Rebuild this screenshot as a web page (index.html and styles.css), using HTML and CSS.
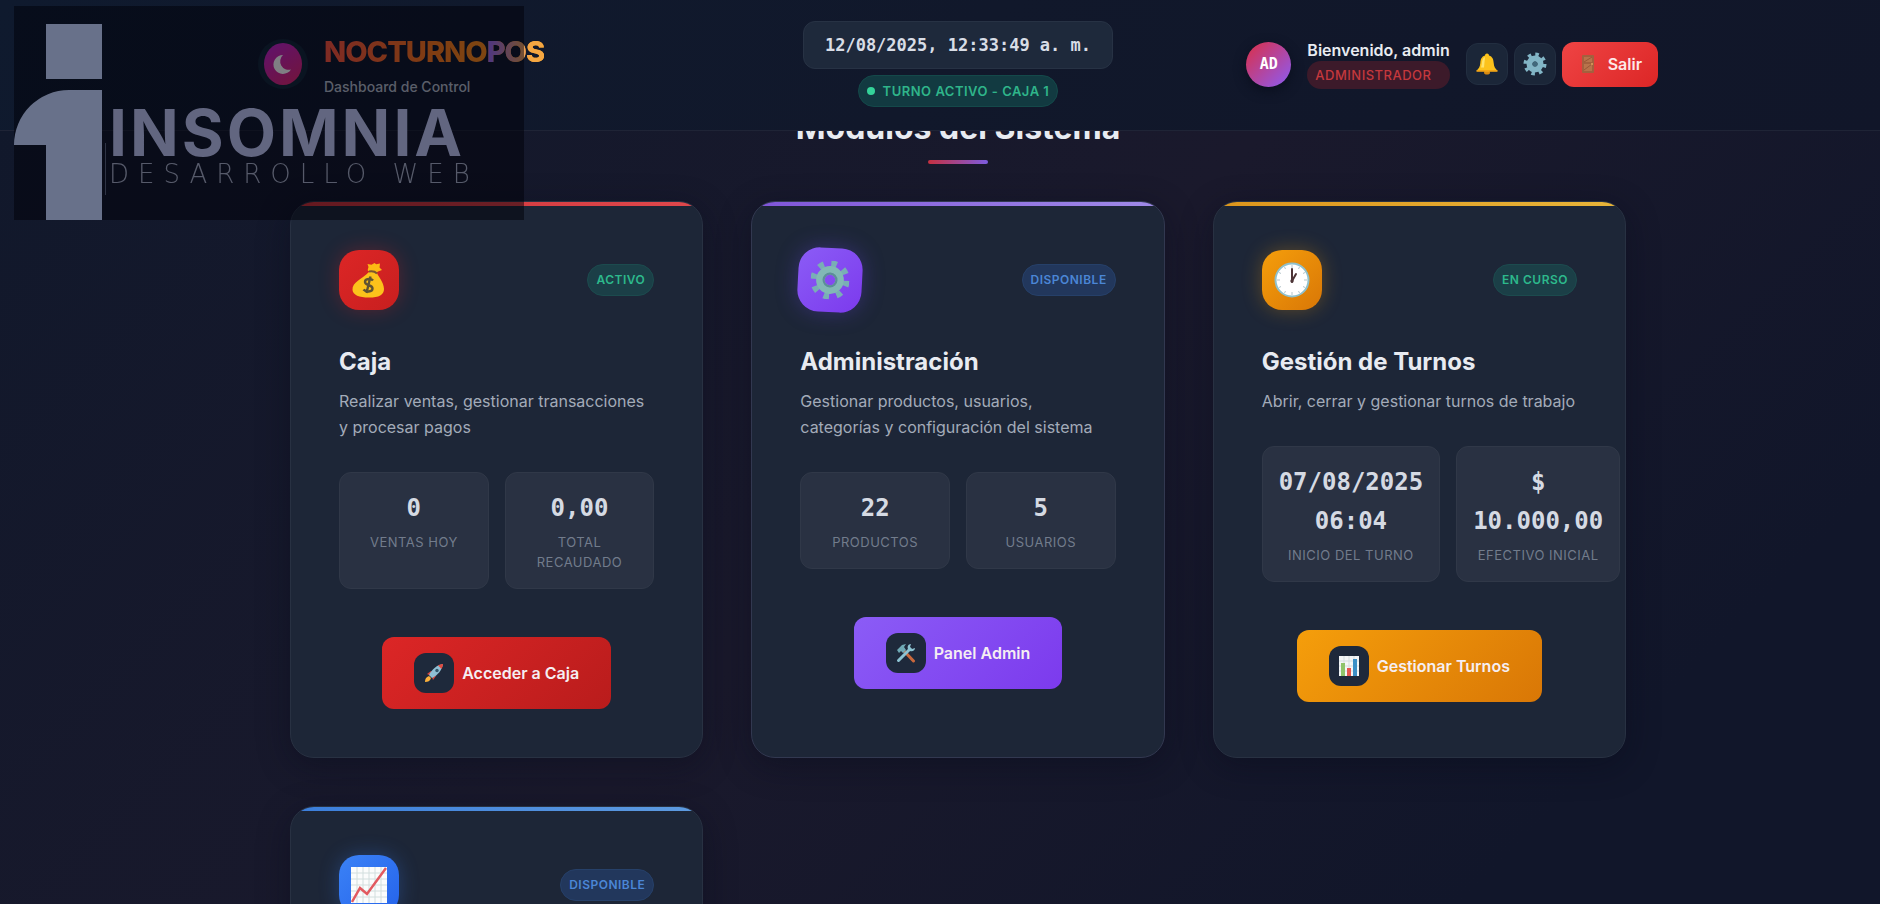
FILE: index.html
```html
<!DOCTYPE html>
<html lang="es">

<head>
    <meta charset="UTF-8">
    <meta name="viewport" content="width=device-width, initial-scale=1.0">
    <title>NocturnoPOS - Dashboard de Control</title>
    <link rel="stylesheet" href="styles.css">
</head>

<body>
    <!-- Header -->
    <header class="header">
        <div class="header-content">
            <div class="logo-section">
                <div class="logo-icon">
                    <svg viewBox="0 0 50 50" width="50" height="50">
                        <defs>
                            <linearGradient id="moonBg" x1="0" y1="0" x2="0.6" y2="1">
                                <stop offset="0" stop-color="#c026d3" />
                                <stop offset="1" stop-color="#e0287c" />
                            </linearGradient>
                        </defs>
                        <circle cx="25" cy="25" r="25" fill="#15283a" />
                        <ellipse cx="25" cy="25" rx="19" ry="21" fill="url(#moonBg)" />
                        <path d="M25 16a9.500 9.500 0 1 0 8 14.500a8.500 8.500 0 0 1-8-14.500z" fill="#fff" />
                    </svg>
                </div>
                <div class="logo-text">
                    <h1>NOCTURNO<span>POS</span></h1>
                    <p>Dashboard de Control</p>
                </div>
            </div>

            <div class="header-center">
                <div class="datetime">12/08/2025, 12:33:49 a. m.</div>
                <div class="turno-status"><span class="dot"></span>TURNO ACTIVO - CAJA 1</div>
            </div>

            <div class="user-section">
                <div class="avatar">AD</div>
                <div class="user-info">
                    <div class="user-name">Bienvenido, admin</div>
                    <div class="user-role">ADMINISTRADOR</div>
                </div>
                <div class="header-actions">
                    <button type="button" class="icon-btn" aria-label="Notificaciones">
                        <svg viewBox="0 0 24 24" width="24" height="24">
                            <ellipse cx="12" cy="20.500" rx="3" ry="2" fill="#d98a10" />
                            <path d="M12 1.500c-1.500 0-2 1-2 2C6.500 4.500 5.500 7.500 5.300 11c-.2 4-1.600 5.500-3.600 7.500h20.600c-2-2-3.400-3.500-3.600-7.500C18.500 7.500 17.500 4.500 14 3.500c0-1-.5-2-2-2z" fill="#fcc21b" />
                            <path d="M10 5c-2.500 1-3 4-3.200 7l-.8 3.500h3z" fill="#ffe36a" />
                            <path d="M1.500 18h21v1.800h-21z" fill="#f2a516" />
                        </svg>
                    </button>
                    <button type="button" class="icon-btn" aria-label="Ajustes">
                        <svg viewBox="0 0 24 24" width="24" height="24">
                            <circle cx="12" cy="12" r="9.500" fill="none" stroke="#82b5c6" stroke-width="4" stroke-dasharray="3.460 4" />
                            <circle cx="12" cy="12" r="5.500" fill="none" stroke="#82b5c6" stroke-width="6" />
                            <circle cx="12" cy="12" r="2.500" fill="#41697c" />
                        </svg>
                    </button>
                    <button type="button" class="logout-btn">
                        <svg viewBox="0 0 20 20" width="20" height="20">
                            <rect x="4" y="1" width="12" height="18" rx="1" fill="#a4603e" />
                            <path d="M6 3h8v5H6zM6 10h8v7H6z" fill="#b8734b" />
                            <path d="M6 8l8-5M6 16l8-6" stroke="#985738" />
                            <circle cx="14" cy="10" r="1" fill="#e0a25e" />
                        </svg>
                        Salir
                    </button>
                </div>
            </div>
        </div>
    </header>

    <!-- Modulos -->
    <main class="main">
        <h2 class="section-title">Módulos del Sistema</h2>

        <div class="modules-grid">
            <article class="module-card caja">
                <div class="module-header">
                    <div class="module-icon">
                        <svg viewBox="0 0 36 36" width="36" height="36">
                            <path d="M18 9c-2 0-1-2-.5-4l-1-3 4 .8L23.500 1l1.700 1.200L29 1.500l-.5 4L31 8l-4 1.500-3 2.500z" fill="#fdb813" />
                            <path d="M18 10c3-1.500 7-1 8 1 .8 3 7 9 7 16 0 6-5 8.500-15 8.500S2 33 1.500 28C1 20 11 17 18 10z" fill="#fcc21b" />
                            <path d="M18 9.500c3-.5 6 0 8 2" fill="none" stroke="#7b5530" stroke-width="2" />
                            <path d="M22 18.500c-1.500-2-8-2.500-8 1.500s7.500 2.500 7.500 6.500-7 3.500-9 1M19.500 14.500l-4 16.500" fill="none" stroke="#5f5333" stroke-width="2.400" />
                        </svg>
                    </div>
                    <span class="badge green">ACTIVO</span>
                </div>
                <h3>Caja</h3>
                <p class="description">Realizar ventas, gestionar transacciones y procesar pagos</p>
                <div class="stats">
                    <div class="stat">
                        <div class="stat-value">0</div>
                        <div class="stat-label">VENTAS HOY</div>
                    </div>
                    <div class="stat">
                        <div class="stat-value">0,00</div>
                        <div class="stat-label">TOTAL RECAUDADO</div>
                    </div>
                </div>
                <button type="button" class="module-btn">
                    <span class="btn-icon">
                        <svg viewBox="0 0 20 20" width="20" height="20">
                            <path d="M3 11l4-3 5 5-3 4-1-3-3-2z" fill="#d9453c" />
                            <path d="M5 12C8 6 13 2 19 1c-1 6-5 11-11 14z" fill="#8fbfd4" />
                            <path d="M14 2.500C16 1.500 17.500 1 19 1c0 1.500-.5 3-1.500 5z" fill="#e24b40" />
                            <circle cx="13" cy="7.500" r="1.700" fill="#34586d" />
                            <path d="M5 13l2 2c-1 3-3 4-6 4 0-3 1-5 4-6z" fill="#fdb13b" />
                        </svg>
                    </span>
                    Acceder a Caja
                </button>
            </article>

            <article class="module-card admin">
                <div class="module-header">
                    <div class="module-icon">
                        <svg viewBox="0 0 36 36" width="36" height="36">
                            <circle cx="18" cy="18" r="15.500" fill="none" stroke="#79aeb5" stroke-width="6" stroke-dasharray="5.170 7" />
                            <circle cx="18" cy="18" r="9" fill="none" stroke="#82b8b5" stroke-width="8" />
                            <circle cx="18" cy="18" r="6" fill="none" stroke="#5c8d99" stroke-width="2" />
                        </svg>
                    </div>
                    <span class="badge blue">DISPONIBLE</span>
                </div>
                <h3>Administración</h3>
                <p class="description">Gestionar productos, usuarios, categorías y configuración del sistema</p>
                <div class="stats">
                    <div class="stat">
                        <div class="stat-value">22</div>
                        <div class="stat-label">PRODUCTOS</div>
                    </div>
                    <div class="stat">
                        <div class="stat-value">5</div>
                        <div class="stat-label">USUARIOS</div>
                    </div>
                </div>
                <button type="button" class="module-btn">
                    <span class="btn-icon">
                        <svg viewBox="0 0 20 20" width="20" height="20">
                            <path d="M8 8l9.500 10" stroke="#c9683c" stroke-width="3" stroke-linecap="round" />
                            <path d="M1 7l5-5 4-1-2 3 2 3-3 3-2-2-2 2z" fill="#6fa9b5" />
                            <path d="M2.500 17.500L14 6" stroke="#8cc3d2" stroke-width="3" stroke-linecap="round" />
                            <path d="M15 1c-3 0-4 3-3 5l2 2c3 1 5-1 5-3l-3 1-2-2z" fill="#8cc3d2" />
                        </svg>
                    </span>
                    Panel Admin
                </button>
            </article>

            <article class="module-card turnos">
                <div class="module-header">
                    <div class="module-icon">
                        <svg viewBox="0 0 36 36" width="36" height="36">
                            <circle cx="18" cy="18" r="16.500" fill="#fff" stroke="#8fc0cb" stroke-width="2" />
                            <path d="M18 3v3M18 30v3M3 18h3M30 18h3M10.500 5l1 2M25.500 5l-1 2M5 10.500l2 1M31 10.500l-2 1M5 25.500l2-1M31 25.500l-2-1M10.500 31l1-2M25.500 31l-1-2" stroke="#b5c5ca" />
                            <path d="M18 20V7M18 19l4-7" stroke="#4d3436" stroke-width="2" stroke-linecap="round" />
                            <circle cx="18" cy="19" r="1.700" fill="#4d3436" />
                        </svg>
                    </div>
                    <span class="badge green">EN CURSO</span>
                </div>
                <h3>Gestión de Turnos</h3>
                <p class="description">Abrir, cerrar y gestionar turnos de trabajo</p>
                <div class="stats">
                    <div class="stat">
                        <div class="stat-value">07/08/2025 06:04</div>
                        <div class="stat-label">INICIO DEL TURNO</div>
                    </div>
                    <div class="stat">
                        <div class="stat-value">$ 10.000,00</div>
                        <div class="stat-label">EFECTIVO INICIAL</div>
                    </div>
                </div>
                <button type="button" class="module-btn">
                    <span class="btn-icon">
                        <svg viewBox="0 0 20 20" width="20" height="20">
                            <rect width="20" height="20" fill="#f3f6f7" />
                            <path d="M0 5h20M0 10h20M0 15h20M5 0v20M10 0v20M15 0v20" stroke="#d5dde0" />
                            <rect x="2" y="7" width="4" height="13" fill="#8fc36b" />
                            <rect x="8" y="12" width="4" height="8" fill="#e5554f" />
                            <rect x="14" y="3" width="4" height="17" fill="#3b8fc6" />
                        </svg>
                    </span>
                    Gestionar Turnos
                </button>
            </article>

            <article class="module-card reportes">
                <div class="module-header">
                    <div class="module-icon">
                        <svg viewBox="0 0 36 36" width="36" height="36">
                            <rect width="36" height="36" fill="#fbfcfc" />
                            <path d="M0 6h36M0 12h36M0 18h36M0 24h36M0 30h36M6 0v36M12 0v36M18 0v36M24 0v36M30 0v36" stroke="#d2dede" />
                            <path d="M1 35l8-14 7 6L35 1" fill="none" stroke="#e25a60" stroke-width="2.500" />
                        </svg>
                    </div>
                    <span class="badge blue">DISPONIBLE</span>
                </div>
            </article>
        </div>
    </main>

    <!-- Marca de agua -->
    <div class="watermark">
        <svg class="watermark-logo" viewBox="0 0 92 196" width="92" height="196">
            <path d="M32 0h56v55H32z" />
            <path d="M0 121A55 55 0 0 1 55 66H88V196H32V121z" />
            <path d="M91 119h1v52h-1z" opacity="0.400" />
        </svg>
        <div class="watermark-text">
            <div class="watermark-name">INSOMNIA</div>
            <div class="watermark-tagline">DESARROLLO WEB</div>
        </div>
    </div>
</body>

</html>
```
FILE: styles.css
```css
* {
    margin: 0;
    padding: 0;
    box-sizing: border-box;
}

html {
    height: 100%;
    overflow: hidden;
}

body {
    height: 100%;
    overflow: hidden;
    padding-left: 36px;
    font-family: Inter, "Liberation Sans", sans-serif;
    font-size: 16px;
    line-height: 26px;
    color: #e8ebf1;
    background: linear-gradient(135deg, #10182b 0%, #1a192c 50%, #11162a 85%);
}

button {
    border: none;
    font-family: inherit;
    font-size: 16px;
    font-weight: 600;
    cursor: pointer;
}

svg {
    display: block;
}

/* Header */
.header {
    position: fixed;
    top: 0;
    left: 0;
    right: 0;
    z-index: 10;
    padding: 21px 0 23px 36px;
    background: linear-gradient(135deg, #0f1a2e 0%, #11182b 50%, #111629 100%);
    border-bottom: 1px solid #1f2436;
}

.header-content {
    display: grid;
    grid-template-columns: 1fr auto 1fr;
    align-items: center;
    max-width: 1400px;
    margin: 0 auto;
}

.logo-section {
    display: flex;
    align-items: center;
    gap: 16px;
}

.logo-text h1 {
    width: fit-content;
    font-size: 29px;
    font-weight: 800;
    line-height: 46px;
    letter-spacing: -1px;
    color: transparent;
    background: linear-gradient(90deg, #ff5540, #ff7a1c 50%, #f9a01b);
    background-clip: text;
}

.logo-text h1 span {
    background: linear-gradient(90deg, #9b6cff, #f5a742 75%);
    background-clip: text;
}

.logo-text p {
    font-size: 14px;
    font-weight: 500;
    line-height: 24px;
    color: #b5bdca;
}

.header-center {
    display: flex;
    flex-direction: column;
    align-items: center;
    gap: 6px;
}

.datetime {
    padding: 10px 21px;
    background: #1e293b;
    border: 1px solid #273244;
    border-radius: 12px;
    font-family: "DejaVu Sans Mono", monospace;
    font-size: 17px;
    font-weight: 700;
    color: #d8dde6;
}

.turno-status {
    display: flex;
    align-items: center;
    gap: 8px;
    padding: 2px 8px;
    background: #123a41;
    border: 1px solid #14494a;
    border-radius: 20px;
    font-size: 13px;
    font-weight: 600;
    letter-spacing: 0.5px;
    color: #2fb58a;
}

.dot {
    width: 8px;
    height: 8px;
    border-radius: 50%;
    background: #34d399;
}

.user-section {
    display: flex;
    justify-content: flex-end;
    align-items: center;
    gap: 16px;
}

.avatar {
    display: flex;
    justify-content: center;
    align-items: center;
    width: 45px;
    height: 45px;
    border-radius: 50%;
    background: linear-gradient(135deg, #dc2f45, #8b5cf6);
    box-shadow: 0 4px 12px #0a0f1e;
    font-family: "DejaVu Sans Mono", monospace;
    font-size: 15px;
    font-weight: 700;
    color: #fff;
}

.user-name {
    font-weight: 600;
    line-height: 22px;
}

.user-role {
    padding: 2px 8px;
    background: #3c1a2a;
    border-radius: 14px;
    font-size: 13px;
    font-weight: 500;
    line-height: 24px;
    letter-spacing: 0.5px;
    color: #c5383d;
}

.header-actions {
    display: flex;
    align-items: center;
    gap: 6px;
}

.icon-btn {
    display: flex;
    justify-content: center;
    align-items: center;
    width: 42px;
    height: 42px;
    background: #1b2638;
    border: 1px solid #222e40;
    border-radius: 12px;
}

.logout-btn {
    display: flex;
    align-items: center;
    gap: 10px;
    padding: 0 16px;
    height: 45px;
    border-radius: 12px;
    background: linear-gradient(135deg, #ef4444, #dc2626);
    color: #fde8e8;
}

/* Contenido */
.main {
    max-width: 1400px;
    margin: 0 auto;
    padding: 108px 32px 0;
}

.section-title {
    margin-bottom: 37px;
    font-size: 32px;
    font-weight: 700;
    line-height: 40px;
    text-align: center;
}

.section-title::after {
    content: "";
    display: block;
    width: 60px;
    height: 4px;
    margin: 12px auto 0;
    border-radius: 2px;
    background: linear-gradient(90deg, #c53040, #7c5ce0);
}

.modules-grid {
    display: grid;
    grid-template-columns: repeat(3, 1fr);
    gap: 48px;
}

.module-card {
    position: relative;
    min-width: 0;
    padding: 48px;
    overflow: hidden;
    background: #1d2637;
    border: 1px solid #283142;
    border-radius: 24px;
    box-shadow: 0 8px 32px rgba(8, 10, 24, 0.4);
}

/* franja de color superior */
.module-card::before {
    content: "";
    position: absolute;
    top: 0;
    left: 0;
    right: 0;
    height: 4px;
    background: var(--bar);
}

.caja {
    --bar: linear-gradient(90deg, #c93238, #e0484c);
    --fill: linear-gradient(135deg, #dc2626, #b91c1c);
    --glow: rgba(220, 38, 38, 0.3);
}

.caja .module-icon {
    background: linear-gradient(135deg, #dc2626, #c81f1f);
}

.admin {
    --bar: linear-gradient(90deg, #7f55d8, #a08be8);
    --fill: linear-gradient(135deg, #8b5cf6, #7c3aed);
    --glow: rgba(99, 70, 220, 0.35);
    border-color: #323850;
}

.turnos {
    --bar: linear-gradient(90deg, #dc951c, #e8b53a);
    --fill: linear-gradient(135deg, #f59e0b, #d97706);
    --glow: rgba(245, 158, 11, 0.3);
}

.reportes {
    --bar: linear-gradient(90deg, #3b7edb, #5e9be0);
    --fill: linear-gradient(135deg, #3b82f6, #2563eb);
    --glow: rgba(59, 130, 246, 0.3);
}

.module-header {
    display: flex;
    justify-content: space-between;
    align-items: center;
    margin-bottom: 32px;
}

.module-icon {
    display: flex;
    justify-content: center;
    align-items: center;
    width: 60px;
    height: 60px;
    border-radius: 20px;
    background: var(--fill);
    box-shadow: 0 0 20px var(--glow);
}

.admin .module-icon {
    transform: scale(1.07) rotate(3deg);
}

.badge {
    padding: 2px 8px;
    border: 1px solid;
    border-radius: 16px;
    font-size: 12px;
    font-weight: 600;
    letter-spacing: 0.5px;
}

.badge.green {
    color: #2db98c;
    background: #1b3f47;
    border-color: #1c4b4e;
}

.badge.blue {
    color: #4b86d6;
    background: #22375c;
    border-color: #264069;
}

.module-card h3 {
    margin-bottom: 6px;
    font-size: 24px;
    font-weight: 700;
    line-height: 40px;
}

.description {
    margin-bottom: 32px;
    color: #a3abb9;
}

.stats {
    display: grid;
    grid-template-columns: 1fr 1fr;
    gap: 16px;
    margin-bottom: 48px;
}

.stat {
    padding: 16px;
    background: #293142;
    border: 1px solid #303848;
    border-radius: 12px;
    text-align: center;
}

.stat-value {
    margin-bottom: 4px;
    font-family: "DejaVu Sans Mono", monospace;
    font-size: 24px;
    font-weight: 700;
    line-height: 39px;
    color: #d5dae3;
}

.stat-label {
    font-size: 13px;
    font-weight: 400;
    line-height: 20px;
    letter-spacing: 0.5px;
    color: #727c8c;
}

.module-btn {
    display: flex;
    align-items: center;
    gap: 8px;
    margin: 0 auto;
    padding: 16px 32px;
    border-radius: 12px;
    background: var(--fill);
    color: #f5eef2;
}

.btn-icon {
    display: flex;
    justify-content: center;
    align-items: center;
    width: 40px;
    height: 40px;
    border-radius: 12px;
    background: #1e293b;
}

/* Marca de agua */
.watermark {
    position: fixed;
    top: 6px;
    left: 14px;
    z-index: 20;
    display: flex;
    align-items: flex-end;
    gap: 3px;
    width: 510px;
    height: 214px;
    background: rgba(0, 0, 8, 0.5);
    pointer-events: none;
}

.watermark-logo {
    fill: #68718a;
}

.watermark-text {
    padding-bottom: 30px;
    white-space: nowrap;
}

.watermark-name {
    font-size: 64px;
    font-weight: 700;
    line-height: 50px;
    letter-spacing: 3px;
    color: #626680;
}

.watermark-tagline {
    font-family: "DejaVu Sans", sans-serif;
    font-size: 26px;
    font-weight: 200;
    line-height: 32px;
    letter-spacing: 9px;
    color: #565a6a;
}
```
